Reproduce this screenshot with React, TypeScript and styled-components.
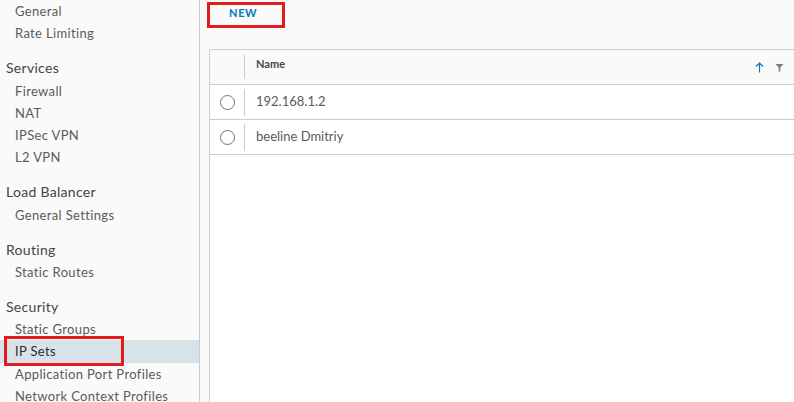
import React from "react";
import styled, { createGlobalStyle } from "styled-components";

const GlobalStyle = createGlobalStyle`
  html, body { margin: 0; padding: 0; }
  body {
    font-family: Lato, "Open Sans", "Liberation Sans", sans-serif;
    background: #fafafa;
  }
  * { box-sizing: border-box; }
`;

const Page = styled.div`
  display: flex;
  width: 794px;
  height: 402px;
  overflow: hidden;
  background: #fafafa;
`;

const Sidebar = styled.nav`
  width: 200px;
  flex-shrink: 0;
  border-right: 1px solid #cccccc;
  background: #fafafa;
  display: flex;
  flex-direction: column;
`;

const NavSection = styled.div<{ $first?: boolean }>`
  display: flex;
  flex-direction: column;
  margin-top: ${(p) => (p.$first ? "0" : "13px")};
`;

const NavHeader = styled.div`
  height: 22.2px;
  line-height: 22.2px;
  padding-left: 6px;
  font-size: 14px;
  letter-spacing: 0.3px;
  color: #444444;
  white-space: nowrap;
`;

const NavItem = styled.div<{ $active?: boolean }>`
  position: relative;
  height: 22.2px;
  line-height: 22.2px;
  padding-left: 15px;
  font-size: 13px;
  letter-spacing: 0.35px;
  white-space: nowrap;
  background: ${(p) => (p.$active ? "#d8e3e9" : "transparent")};
  color: ${(p) => (p.$active ? "#2b2b2b" : "#5a5a5a")};
`;

const Annotation = styled.div<{ $l: number; $t: number; $w: number; $h: number }>`
  position: absolute;
  left: ${(p) => p.$l}px;
  top: ${(p) => p.$t}px;
  width: ${(p) => p.$w}px;
  height: ${(p) => p.$h}px;
  border: 3px solid #e41b1b;
  pointer-events: none;
`;

const Main = styled.main`
  flex: 1;
  min-width: 0;
  display: flex;
  flex-direction: column;
  padding-left: 9px;
  background: #fafafa;
  overflow: hidden;
`;

const Toolbar = styled.div`
  height: 49px;
  flex-shrink: 0;
  display: flex;
  align-items: flex-start;
  padding-left: 20px;
`;

const NewButton = styled.button`
  position: relative;
  height: 25px;
  padding: 0;
  border: none;
  background: none;
  font-family: inherit;
  font-size: 11px;
  font-weight: 700;
  letter-spacing: 0.06em;
  color: #0079b8;
  text-transform: uppercase;
  cursor: pointer;
`;

const Grid = styled.div`
  flex: 1;
  margin-right: -6px;
  background: #ffffff;
  border-top: 1px solid #cccccc;
  border-left: 1px solid #cccccc;
  border-top-left-radius: 3px;
  display: flex;
  flex-direction: column;
`;

const HeaderRow = styled.div`
  height: 35px;
  display: grid;
  grid-template-columns: 34px 1px 1fr;
  align-items: center;
  background: #fafafa;
  border-bottom: 1px solid #cccccc;
  border-top-left-radius: 3px;
`;

const Row = styled.div`
  height: 35px;
  display: grid;
  grid-template-columns: 34px 1px 1fr;
  align-items: center;
  border-bottom: 1px solid #cccccc;
`;

const Separator = styled.div<{ $h: number }>`
  width: 1px;
  height: ${(p) => p.$h}px;
  background: #cccccc;
`;

const SelectCell = styled.div`
  display: flex;
  justify-content: center;
  align-items: center;
`;

const Radio = styled.span`
  width: 15px;
  height: 15px;
  border-radius: 50%;
  border: 1px solid #6f7579;
  background: #ffffff;
`;

const HeaderCell = styled.div`
  display: flex;
  align-items: center;
  padding-left: 11px;
  padding-right: 16px;
  font-size: 11px;
  font-weight: 700;
  color: #454545;
  margin-top: -7px;
`;

const HeaderIcons = styled.div`
  margin-left: auto;
  display: flex;
  align-items: center;
  gap: 11px;
  margin-top: 7px;
`;

const Cell = styled.div`
  padding-left: 11px;
  font-size: 13px;
  color: #5a5a5a;
  margin-top: -2px;
`;

const SortArrow = () => (
  <svg width="9" height="11" viewBox="0 0 9 11">
    <path d="M4.5 1 V10.5" stroke="#0079b8" strokeWidth="1.2" fill="none" />
    <path d="M1 4.5 L4.5 1 L8 4.5" stroke="#0079b8" strokeWidth="1.2" fill="none" />
  </svg>
);

const FilterIcon = () => (
  <svg width="9" height="9" viewBox="0 0 9 9">
    <path d="M0.5 1 H8.5 L5.3 4.5 V8.5 H3.7 V4.5 Z" fill="#7d7d7d" />
  </svg>
);

const nav = [
  { header: null, items: ["General", "Rate Limiting"] },
  { header: "Services", items: ["Firewall", "NAT", "IPSec VPN", "L2 VPN"] },
  { header: "Load Balancer", items: ["General Settings"] },
  { header: "Routing", items: ["Static Routes"] },
  {
    header: "Security",
    items: ["Static Groups", "IP Sets", "Application Port Profiles", "Network Context Profiles"],
  },
];

const rows = ["192.168.1.2", "beeline Dmitriy"];

export default function App() {
  return (
    <>
      <GlobalStyle />
      <Page>
        <Sidebar>
          {nav.map((s, i) => (
            <NavSection key={i} $first={i === 0}>
              {s.header && <NavHeader>{s.header}</NavHeader>}
              {s.items.map((it) => (
                <NavItem key={it} $active={it === "IP Sets"}>
                  {it}
                  {it === "IP Sets" && <Annotation $l={4} $t={-4} $w={120} $h={30} />}
                </NavItem>
              ))}
            </NavSection>
          ))}
        </Sidebar>
        <Main>
          <Toolbar>
            <NewButton>
              New
              <Annotation $l={-22} $t={2} $w={78} $h={26} />
            </NewButton>
          </Toolbar>
          <Grid>
            <HeaderRow>
              <SelectCell />
              <Separator $h={24} />
              <HeaderCell>
                Name
                <HeaderIcons>
                  <SortArrow />
                  <FilterIcon />
                </HeaderIcons>
              </HeaderCell>
            </HeaderRow>
            {rows.map((r) => (
              <Row key={r}>
                <SelectCell>
                  <Radio />
                </SelectCell>
                <Separator $h={27} />
                <Cell>{r}</Cell>
              </Row>
            ))}
          </Grid>
        </Main>
      </Page>
    </>
  );
}
